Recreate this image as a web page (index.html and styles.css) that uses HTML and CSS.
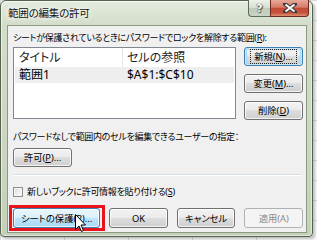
FILE: index.html
```html
<!DOCTYPE html>
<html lang="ja">
<head>
<meta charset="utf-8">
<link rel="stylesheet" href="styles.css">
</head>
<body>
<div class="window">
  <div class="titlebar">
    <span class="title">範囲の編集の許可</span>
    <div class="caption-btns">
      <span class="cb help">?</span>
      <span class="cb close"><svg width="14" height="10" viewBox="0 0 14 10"><path d="M2 1 L12 9 M12 1 L2 9" stroke="#3a3a3a" stroke-width="4" stroke-linecap="square"/><path d="M2.5 1.5 L11.5 8.5 M11.5 1.5 L2.5 8.5" stroke="#fff" stroke-width="2"/></svg></span>
    </div>
  </div>
  <div class="client">
    <div class="label">シートが保護されているときにパスワードでロックを解除する範囲(<u>R</u>):</div>
    <div class="row">
      <div class="list">
        <div class="lhead"><span class="c1">タイトル</span><span class="c2">セルの参照</span></div>
        <div class="litem sel"><span class="c1">範囲1</span><span class="c2">$A$1:$C$10</span></div>
      </div>
      <div class="side">
        <button class="btn focus"><span class="focusrect">新規(<u>N</u>)...</span></button>
        <button class="btn">変更(<u>M</u>)...</button>
        <button class="btn">削除(<u>D</u>)</button>
      </div>
    </div>
    <div class="label2">パスワードなしで範囲内のセルを編集できるユーザーの指定：</div>
    <div class="permrow"><button class="btn">許可(<u>P</u>)...</button></div>
    <div class="sep"></div>
    <div class="check"><span class="box"></span><span>新しいブックに許可情報を貼り付ける(<u>S</u>)</span></div>
    <div class="bottom">
      <button class="btn hover hl">シートの保護(<u>R</u>)...<svg class="cursor" width="12" height="19" viewBox="0 0 12 19"><path d="M0.5 0.5 L0.5 15.5 L4 12 L6.5 17.5 L8.5 16.5 L6 11 L10.5 11 Z" fill="#fff" stroke="#000" stroke-width="1"/></svg></button>
      <button class="btn">OK</button>
      <button class="btn">キャンセル</button>
      <button class="btn disabled">適用(A)</button>
    </div>
  </div>
</div>
</body>
</html>
```
FILE: styles.css
```css
html, body {
  margin: 0;
  padding: 0;
}
body {
  width: 317px;
  height: 240px;
  overflow: hidden;
  background-color: #fbfbfb;
  background-image:
    linear-gradient(90deg, #d9d9d9 1px, transparent 1px),
    linear-gradient(#d9d9d9 1px, transparent 1px);
  background-size: 64px 20px;
  font-family: "Noto Sans", "Noto Sans CJK JP", sans-serif;
  font-feature-settings: "palt";
  font-size: 9px;
  color: #000;
}
u { text-decoration: underline; text-underline-offset: 1px; }

.window {
  width: 313px;
  height: 237px;
  box-sizing: border-box;
  border: 1px solid #56624f;
  border-radius: 6px 6px 4px 4px;
  background: linear-gradient(180deg, #e4ebde 0px, #d3ddca 24px, #c4d1b8 100%);
  padding: 0 5px 3px 6px;
  display: flex;
  flex-direction: column;
  box-shadow: 2px 2px 3px rgba(0,0,0,0.25), inset 1px 1px 0 rgba(255,255,255,0.6), inset -1px -1px 0 rgba(255,255,255,0.5);
}
.titlebar {
  height: 24px;
  margin: 0 -5px 0 -6px;
  padding: 0 3px 0 7px;
  display: flex;
  justify-content: space-between;
  align-items: flex-start;
}
.title {
  font-size: 10.5px;
  line-height: 24px;
  letter-spacing: -0.2px;
  color: #111;
  text-shadow: 0 0 4px #fff, 0 0 6px #fff;
}
.caption-btns {
  display: flex;
  margin-top: -1px;
}
.cb {
  height: 17px;
  box-sizing: border-box;
  display: flex;
  align-items: center;
  justify-content: center;
  border: 1px solid #5f6c58;
  border-top: none;
}
.help {
  width: 22px;
  border-radius: 0 0 0 4px;
  background: linear-gradient(180deg, #eef2ea 0%, #d5ded0 50%, #bfcab9 51%, #c9d4c3 100%);
  font-family: "DejaVu Sans", sans-serif;
  font-weight: bold;
  font-size: 11px;
  color: #fff;
  text-shadow: 0 0 1px #333, 0 0 1px #333, 1px 1px 1px #555;
  border-right: none;
}
.close {
  width: 39px;
  border-radius: 0 0 4px 0;
  border-color: #6a2a20;
  background: linear-gradient(180deg, #e9a99b 0%, #d77a68 45%, #c24b35 52%, #c8523c 80%, #de8f70 100%);
}

.client {
  flex: 1;
  border: 1px solid #8c9a84;
  background: #f0f0f0;
  padding: 5px 3px 0 5px;
  display: flex;
  flex-direction: column;
}
.label, .label2, .check {
  height: 14px;
  line-height: 14px;
  white-space: nowrap;
  letter-spacing: -0.3px;
}
.row {
  display: flex;
  margin-top: 2px;
  gap: 8px;
}
.list {
  width: 223px;
  height: 72px;
  box-sizing: border-box;
  border: 1px solid #828790;
  background: #fff;
  font-size: 12px;
}
.lhead, .litem {
  display: flex;
  height: 16px;
  line-height: 16px;
  white-space: nowrap;
}
.lhead {
  height: 19px;
  line-height: 19px;
  color: #1e1e1e;
}
.lhead .c1 { border-right: 1px solid #e3e5e8; }
.c1 { width: 109px; padding-left: 5px; box-sizing: border-box; }
.c2 { padding-left: 4px; }
.litem.sel { background: #eeeeee; margin: 0 1px; }
.litem.sel .c1 { width: 108px; padding-left: 4px; }

.side {
  display: flex;
  flex-direction: column;
  gap: 8px;
}
.btn {
  width: 59px;
  height: 19px;
  box-sizing: border-box;
  border: 1px solid #707070;
  border-radius: 3px;
  background: linear-gradient(180deg, #f2f2f2 0%, #ebebeb 49%, #dddddd 50%, #cfcfcf 100%);
  box-shadow: inset 0 0 0 1px rgba(255,255,255,0.75);
  font-family: inherit;
  font-feature-settings: "palt";
  font-size: 9.3px;
  line-height: 13px;
  padding: 0;
  color: #000;
  white-space: nowrap;
  display: flex;
  align-items: center;
  justify-content: center;
}
.btn.focus {
  border-color: #3c7fb1;
  box-shadow: inset 0 0 0 1px #cbe8f8, inset 0 0 0 2px #a8d8f3;
}
.focusrect {
  outline: 1px dotted #222;
  outline-offset: 0;
  padding: 0 3px;
  line-height: 13px;
}
.label2 { margin-top: 10px; }
.permrow { margin-top: 4px; }
.sep {
  height: 0;
  border-top: 1px solid #d5dfe5;
  border-bottom: 1px solid #fff;
  margin: 7px 1px 0 0;
}
.check {
  margin-top: 9px;
  display: flex;
  align-items: center;
  gap: 4px;
}
.box {
  width: 10px;
  height: 10px;
  box-sizing: border-box;
  border: 1px solid #8f8f8f;
  background: linear-gradient(135deg, #dcdcdc, #fefefe);
  box-shadow: inset 0 0 0 1px #f4f4f4;
}
.bottom {
  display: flex;
  gap: 9px;
  margin-top: 9px;
}
.bottom .btn { height: 20px; }
.bottom .hl {
  width: 88px;
  position: relative;
}
.bottom .hl::after {
  content: "";
  position: absolute;
  left: -5px;
  right: -6px;
  top: -4px;
  bottom: -4px;
  border: 3px solid #e8141c;
}
.btn.hover {
  border-color: #3c7fb1;
  background: linear-gradient(180deg, #eaf6fd 0%, #d9f0fc 49%, #bee6fd 50%, #a7d9f5 100%);
}
.cursor {
  position: absolute;
  left: 61px;
  top: 5px;
  z-index: 1;
}
.btn.disabled {
  border-color: #adb2b5;
  background: #f4f4f4;
  box-shadow: none;
  color: #8d8d8d;
}
```
